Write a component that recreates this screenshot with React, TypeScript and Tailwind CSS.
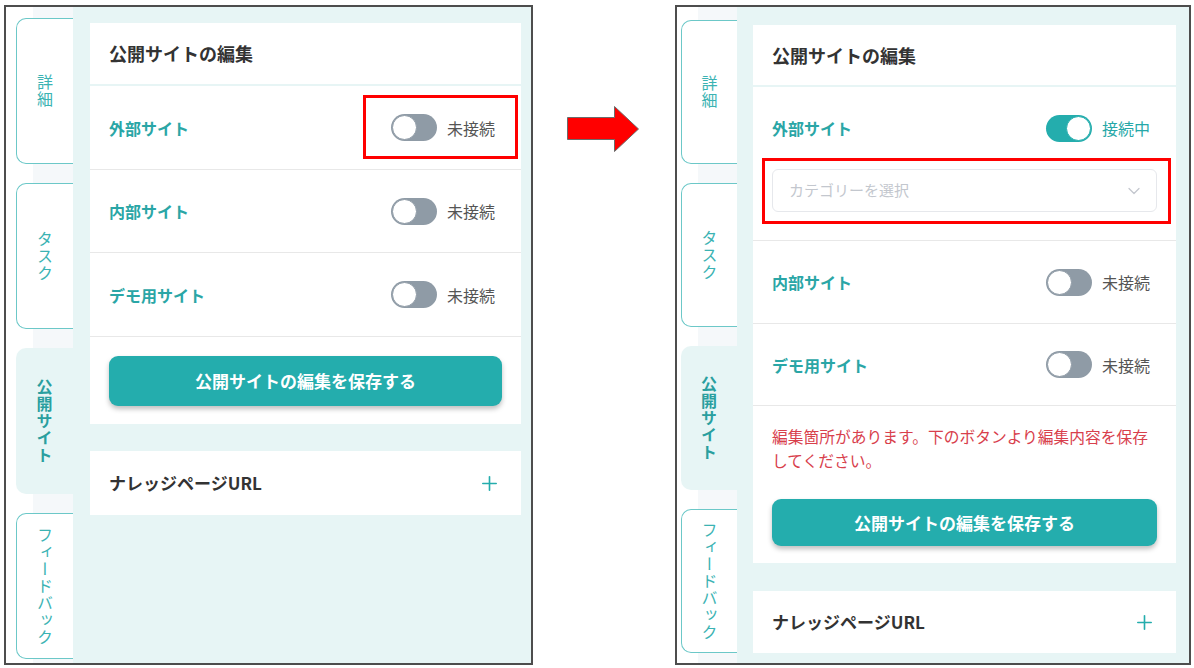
import { ChevronDown, Plus } from "lucide-react";

type TabDef = { label: string; active?: boolean };

const tabs: TabDef[] = [
  { label: "詳細" },
  { label: "タスク" },
  { label: "公開サイト", active: true },
  { label: "フィードバック" },
];

function Tab({ label, active, heightClass }: TabDef & { heightClass: string }) {
  if (active) {
    return (
      <div className={`${heightClass} flex items-center justify-center rounded-l-[10px] bg-[#e7f5f5]`}>
        <span className="[writing-mode:vertical-rl] text-[16px] font-bold leading-none tracking-[1px] text-[#2a9f9f]">
          {label}
        </span>
      </div>
    );
  }
  return (
    <div
      className={`${heightClass} flex items-center justify-center rounded-l-[10px] border-[1.5px] border-r-0 border-[#6cc8c8] bg-white`}
    >
      <span className="[writing-mode:vertical-rl] text-[16px] leading-none tracking-[1px] text-[#3bb3b3]">
        {label}
      </span>
    </div>
  );
}

function Toggle({ on }: { on: boolean }) {
  return (
    <span
      className={`flex h-[27px] w-[46px] items-center rounded-full p-px ${
        on ? "justify-end bg-[#24adad]" : "justify-start bg-[#8f9ba6]"
      }`}
    >
      <span
        className={`h-[25px] w-[25px] rounded-full border bg-white ${
          on ? "border-[#24adad]" : "border-[#8f9ba6]"
        }`}
      />
    </span>
  );
}

function SiteLine({ label, on, heightClass }: { label: string; on: boolean; heightClass: string }) {
  return (
    <div className={`${heightClass} flex items-center justify-between pl-[19px] pr-[26px]`}>
      <span className="text-[16px] font-bold text-[#2aa6a6]">{label}</span>
      <div className="flex items-center gap-[10px]">
        <Toggle on={on} />
        <span className={`text-[16px] ${on ? "text-[#26a8a8]" : "text-[#555]"}`}>
          {on ? "接続中" : "未接続"}
        </span>
      </div>
    </div>
  );
}

function SaveButton({ heightClass }: { heightClass: string }) {
  return (
    <button
      className={`${heightClass} w-full rounded-[9px] bg-[#24adad] text-[17px] font-bold text-white shadow-[0_3px_5px_rgba(0,0,0,0.25)]`}
    >
      公開サイトの編集を保存する
    </button>
  );
}

function KnowledgeCard({ heightClass }: { heightClass: string }) {
  return (
    <div className={`${heightClass} flex items-center justify-between bg-white pl-[19px] pr-[20px]`}>
      <span className="text-[17px] font-bold text-[#333]">ナレッジページURL</span>
      <Plus size={23} strokeWidth={1.7} className="text-[#24adad]" />
    </div>
  );
}

function Before() {
  return (
    <div className="flex h-[660px] w-[529px] shrink-0 border-2 border-[#4d4d4d]">
      {/* tabs */}
      <div className="flex w-[67px] flex-col gap-[19px] bg-[linear-gradient(to_right,#ffffff_27px,#f5f8fa_27px)] pl-[10px] pt-[11px]">
        {tabs.map((t) => (
          <Tab key={t.label} {...t} heightClass="h-[146px]" />
        ))}
      </div>

      {/* main */}
      <div className="flex flex-1 flex-col gap-[27px] bg-[#e7f5f5] pl-[17px] pr-[10px] pt-[16px]">
        <div className="bg-white">
          <div className="flex h-[63px] items-center border-b-2 border-[#e7f5f5] pl-[19px]">
            <span className="text-[18px] font-bold text-[#333]">公開サイトの編集</span>
          </div>
          <div className="relative border-b border-[#e8e8e8]">
            <SiteLine label="外部サイト" on={false} heightClass="h-[83px]" />
            {/* annotation */}
            <div className="absolute left-[273px] top-[9px] h-[64px] w-[155px] border-[3px] border-[#ff0000]" />
          </div>
          <div className="border-b border-[#e8e8e8]">
            <SiteLine label="内部サイト" on={false} heightClass="h-[82px]" />
          </div>
          <div className="border-b border-[#e8e8e8]">
            <SiteLine label="デモ用サイト" on={false} heightClass="h-[83px]" />
          </div>
          <div className="px-[19px] pb-[18px] pt-[19px]">
            <SaveButton heightClass="h-[50px]" />
          </div>
        </div>
        <KnowledgeCard heightClass="h-[64px]" />
      </div>
    </div>
  );
}

function After() {
  return (
    <div className="flex h-[660px] w-[516px] shrink-0 border-2 border-[#4d4d4d]">
      {/* tabs */}
      <div className="flex w-[60px] flex-col gap-[19px] bg-[linear-gradient(to_right,#ffffff_21px,#f5f8fa_21px)] pl-[4px] pt-[13px]">
        {tabs.map((t) => (
          <Tab key={t.label} {...t} heightClass="h-[144px]" />
        ))}
      </div>

      {/* main */}
      <div className="flex flex-1 flex-col gap-[28px] bg-[#e7f5f5] pl-[16px] pr-[13px] pt-[18px]">
        <div className="bg-white">
          <div className="flex h-[62px] items-center border-b-2 border-[#e7f5f5] pl-[19px]">
            <span className="text-[18px] font-bold text-[#333]">公開サイトの編集</span>
          </div>
          <div className="relative border-b border-[#e8e8e8] pb-[28px]">
            <SiteLine label="外部サイト" on heightClass="h-[82px]" />
            <div className="mx-[19px] flex h-[43px] items-center justify-between rounded-[6px] border border-[#e6e8ec] pl-[16px] pr-[12px]">
              <span className="text-[15px] text-[#c3c7ce]">カテゴリーを選択</span>
              <ChevronDown size={20} strokeWidth={1.5} className="text-[#c3c7ce]" />
            </div>
            {/* annotation */}
            <div className="absolute left-[9px] top-[71px] h-[66px] w-[409px] border-[3px] border-[#ff0000]" />
          </div>
          <div className="border-b border-[#e8e8e8]">
            <SiteLine label="内部サイト" on={false} heightClass="h-[82px]" />
          </div>
          <div className="border-b border-[#e8e8e8]">
            <SiteLine label="デモ用サイト" on={false} heightClass="h-[81px]" />
          </div>
          <div className="px-[19px] pb-[17px] pt-[19px]">
            <p className="whitespace-nowrap text-[15.75px] leading-[24px] text-[#d8404c]">
              編集箇所があります。下のボタンより編集内容を保存
              <br />
              してください。
            </p>
            <div className="mt-[26px]">
              <SaveButton heightClass="h-[47px]" />
            </div>
          </div>
        </div>
        <KnowledgeCard heightClass="h-[62px]" />
      </div>
    </div>
  );
}

function Arrow() {
  return (
    <svg width="73" height="46" viewBox="0 0 73 46" className="shrink-0">
      <polygon
        points="0.5,11.5 47.5,11.5 47.5,0.5 71.5,23 47.5,45.5 47.5,33.5 0.5,33.5"
        fill="#ff0000"
        stroke="#6b6b6b"
        strokeWidth="1"
      />
    </svg>
  );
}

export default function App() {
  return (
    <div className="flex h-[668px] w-[1194px] items-start bg-white pl-[4px] pt-[5px] font-['Noto_Sans_CJK_JP',sans-serif]">
      <Before />
      <div className="ml-[34px] mr-[35px] mt-[101px]">
        <Arrow />
      </div>
      <After />
    </div>
  );
}
